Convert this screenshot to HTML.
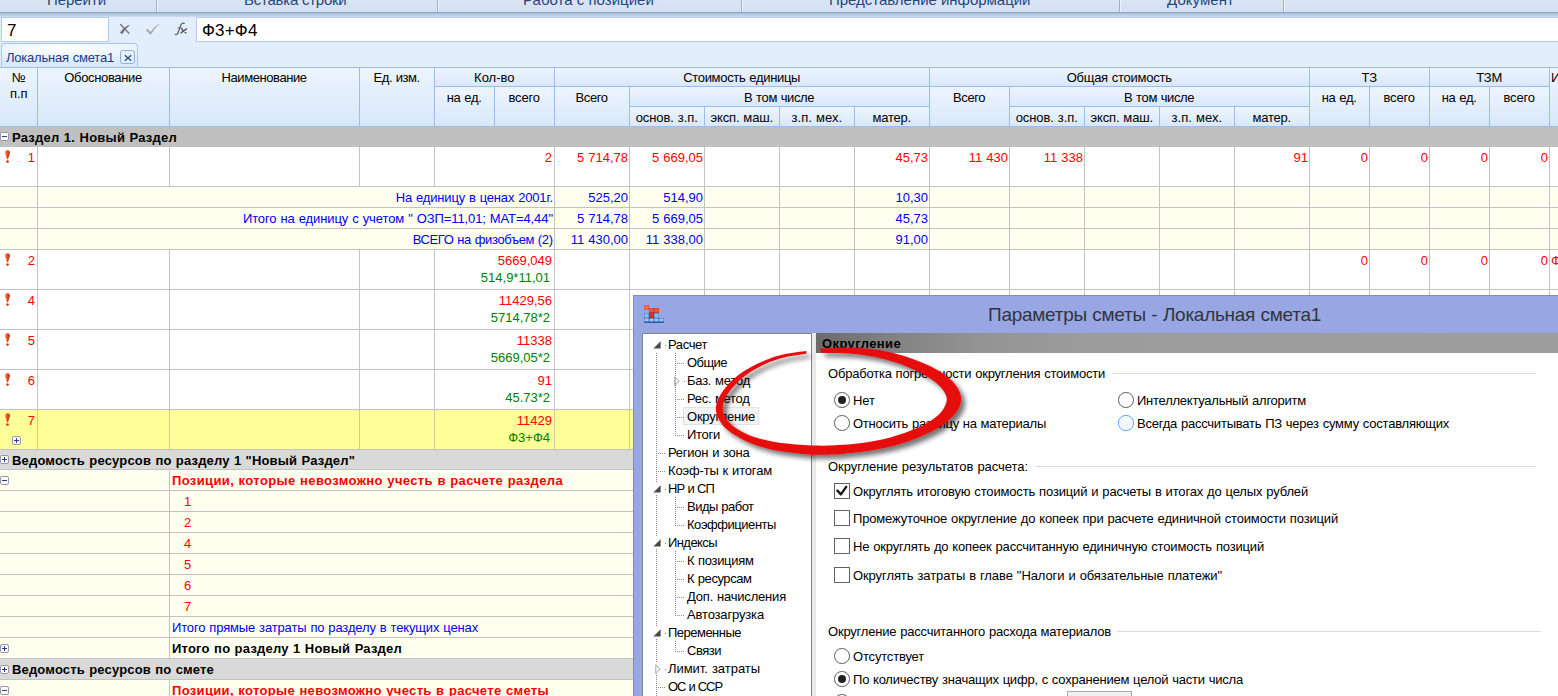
<!DOCTYPE html><html><head><meta charset="utf-8"><title>Smeta</title><style>
*{margin:0;padding:0;box-sizing:border-box}
html,body{width:1558px;height:696px;overflow:hidden;background:#fff}
body{font-family:"Liberation Sans",sans-serif;font-size:13px;color:#000;position:relative}
.a{position:absolute;white-space:nowrap}
.t{position:absolute;white-space:nowrap;line-height:15px;height:15px;word-spacing:0.5px}
.r{text-align:right}
.c{text-align:center}
.red{color:#ff0000}
.blue{color:#0000f0}
.grn{color:#008000}
.b{font-weight:bold}
.hl{position:absolute;height:1px;background:#c2c2c2}
.vl{position:absolute;width:1px;background:#c2c2c2}
.hh{position:absolute;height:1px;background:#9dbde9}
.hv{position:absolute;width:1px;background:#9dbde9}
.hc{position:absolute;background:linear-gradient(#ecf4fe,#e3eefc 50%,#d7e7fb)}
.pm{position:absolute;width:9px;height:9px;border:1px solid #9898a8;border-radius:2px;background:#fff}
.pm i{position:absolute;left:1px;top:3px;width:5px;height:1px;background:#2a3c8c}
.pm b{position:absolute;left:3px;top:1px;width:1px;height:5px;background:#2a3c8c}
</style></head><body>
<div class="a" style="left:0;top:0;width:1558px;height:13px;background:linear-gradient(#d9e5f4,#d3e0f1)"></div>
<div class="a" style="left:0;top:12px;width:1558px;height:1px;background:#8fa5c5"></div>
<div class="a" style="left:0;top:13px;width:1558px;height:4px;background:linear-gradient(#a9bcd8,#cfdef1)"></div>
<div class="a" style="left:156px;top:0;width:1px;height:12px;background:#9eb2cf"></div>
<div class="a" style="left:157px;top:0;width:1px;height:12px;background:#eef4fb"></div>
<div class="a" style="left:437px;top:0;width:1px;height:12px;background:#9eb2cf"></div>
<div class="a" style="left:438px;top:0;width:1px;height:12px;background:#eef4fb"></div>
<div class="a" style="left:741px;top:0;width:1px;height:12px;background:#9eb2cf"></div>
<div class="a" style="left:742px;top:0;width:1px;height:12px;background:#eef4fb"></div>
<div class="a" style="left:1119px;top:0;width:1px;height:12px;background:#9eb2cf"></div>
<div class="a" style="left:1120px;top:0;width:1px;height:12px;background:#eef4fb"></div>
<div class="a" style="left:1283px;top:0;width:1px;height:12px;background:#9eb2cf"></div>
<div class="a" style="left:1284px;top:0;width:1px;height:12px;background:#eef4fb"></div>
<div class="a" style="left:0;top:0;width:1558px;height:12px;overflow:hidden">
<div class="a" style="left:47px;top:-9px;font-size:15px;line-height:18px;color:#24467e;letter-spacing:-0.062px">Перейти</div>
<div class="a" style="left:244px;top:-9px;font-size:15px;line-height:18px;color:#24467e;letter-spacing:-0.250px">Вставка строки</div>
<div class="a" style="left:523px;top:-9px;font-size:15px;line-height:18px;color:#24467e;letter-spacing:0.016px">Работа с позицией</div>
<div class="a" style="left:829px;top:-9px;font-size:15px;line-height:18px;color:#24467e;letter-spacing:-0.025px">Представление информации</div>
<div class="a" style="left:1167px;top:-9px;font-size:15px;line-height:18px;color:#24467e;letter-spacing:0.057px">Документ</div>
</div>
<div class="a" style="left:0;top:17px;width:1558px;height:26px;background:#e3eefc"></div>
<div class="a" style="left:1px;top:17px;width:108px;height:25px;background:#fff;border:1px solid #b4cbea"></div>
<div class="a" style="left:7px;top:20px;font-size:17px;line-height:21px">7</div>
<div class="a" style="left:196px;top:17px;width:1370px;height:25px;background:#fff;border:1px solid #b4cbea"></div>
<div class="a" style="left:202px;top:20px;font-size:17px;line-height:21px;letter-spacing:0.163px">Ф3+Ф4</div>
<svg class="a" style="left:116px;top:20px" width="76" height="20" viewBox="116 20 76 20"><path d="M120.6 24.6 L128.9 33.3" stroke="#7a7a7a" stroke-width="1.5" fill="none" stroke-linecap="round"/><path d="M120.3 32.6 C122.5 29.5 125.5 26.8 128.9 25 L129.2 25.5 C126.5 27.8 124 30.6 122.2 33.9 Z" fill="#6c6c6c" stroke="#6c6c6c" stroke-width="0.5" stroke-linejoin="round"/><path d="M145.9 30.1 L147.3 28.7 L150.6 32.1 C153 28.6 155.8 25.8 159 23.8 L159.3 24.3 C156 27.2 153.2 30.6 150.9 34.6 L150.2 34.6 Z" fill="#a6a6a6"/></svg>
<svg class="a" style="left:172px;top:20px" width="20" height="18" viewBox="172 20 20 18"><path d="M175.2 34.4 C176.6 35.2 177.6 34.2 178.2 32.2 L180.6 25.6 C181.3 23.6 182.6 22.6 184.2 23.4" stroke="#5e5e5e" stroke-width="1.25" fill="none" stroke-linecap="round"/><path d="M177.6 27.9 L182.6 27.9" stroke="#6a6a6a" stroke-width="0.9" fill="none"/><path d="M181.6 28.9 L186 32.9 M186.6 28.9 L181 32.9" stroke="#555" stroke-width="1.3" fill="none" stroke-linecap="round"/></svg>
<div class="a" style="left:0;top:43px;width:1558px;height:24px;background:#e3eefc"></div>
<div class="a" style="left:1px;top:43px;width:137px;height:25px;border:1px solid #a9c5ec;border-bottom:none;border-radius:4px 4px 0 0;background:radial-gradient(ellipse 70% 60% at 45% 18%,#ffffff,#eef5fe 55%,rgba(226,237,252,0) 100%),linear-gradient(#eef5fe,#dfebfb 60%,#d9e7fa)"></div>
<div class="t " style="letter-spacing:-0.212px;left:6px;top:50.00px;color:#1c3a8c;">Локальная смета1</div>
<div class="a" style="left:120px;top:50px;width:15px;height:14px;border:1px solid #8fadde;border-radius:2.5px;background:#e6f0fc"></div>
<svg class="a" style="left:123.5px;top:53.5px" width="8" height="8" viewBox="0 0 8 8"><path d="M0.8 1.2 L7.2 6.8 M7.2 1.2 L0.8 6.8" stroke="#2a4a9c" stroke-width="1.35" fill="none"/></svg>
<div class="a" style="left:0;top:67px;width:1558px;height:60px;background:#dde9fa"></div>
<div class="hc" style="left:0px;top:68px;width:37px;height:59px"></div>
<div class="hc" style="left:37px;top:68px;width:132px;height:59px"></div>
<div class="hc" style="left:169px;top:68px;width:190px;height:59px"></div>
<div class="hc" style="left:359px;top:68px;width:75px;height:59px"></div>
<div class="hc" style="left:1549px;top:68px;width:9px;height:59px"></div>
<div class="hc" style="left:434px;top:68px;width:120px;height:19px"></div>
<div class="hc" style="left:554px;top:68px;width:375px;height:19px"></div>
<div class="hc" style="left:929px;top:68px;width:380px;height:19px"></div>
<div class="hc" style="left:1309px;top:68px;width:120px;height:19px"></div>
<div class="hc" style="left:1429px;top:68px;width:120px;height:19px"></div>
<div class="hc" style="left:434px;top:87px;width:60px;height:40px"></div>
<div class="hc" style="left:494px;top:87px;width:60px;height:40px"></div>
<div class="hc" style="left:554px;top:87px;width:75px;height:40px"></div>
<div class="hc" style="left:929px;top:87px;width:80px;height:40px"></div>
<div class="hc" style="left:1309px;top:87px;width:60px;height:40px"></div>
<div class="hc" style="left:1369px;top:87px;width:60px;height:40px"></div>
<div class="hc" style="left:1429px;top:87px;width:60px;height:40px"></div>
<div class="hc" style="left:1489px;top:87px;width:60px;height:40px"></div>
<div class="hc" style="left:629px;top:87px;width:300px;height:20px"></div>
<div class="hc" style="left:1009px;top:87px;width:300px;height:20px"></div>
<div class="hc" style="left:629px;top:107px;width:75px;height:20px"></div>
<div class="hc" style="left:704px;top:107px;width:75px;height:20px"></div>
<div class="hc" style="left:779px;top:107px;width:75px;height:20px"></div>
<div class="hc" style="left:854px;top:107px;width:75px;height:20px"></div>
<div class="hc" style="left:1009px;top:107px;width:75px;height:20px"></div>
<div class="hc" style="left:1084px;top:107px;width:75px;height:20px"></div>
<div class="hc" style="left:1159px;top:107px;width:75px;height:20px"></div>
<div class="hc" style="left:1234px;top:107px;width:75px;height:20px"></div>
<div class="hh" style="left:0;top:67px;width:1558px"></div>
<div class="hh" style="left:0;top:126px;width:1558px"></div>
<div class="hh" style="left:434px;top:86px;width:1115px"></div>
<div class="hh" style="left:629px;top:106px;width:300px"></div>
<div class="hh" style="left:1009px;top:106px;width:300px"></div>
<div class="hv" style="left:37px;top:67px;height:60px"></div>
<div class="hv" style="left:169px;top:67px;height:60px"></div>
<div class="hv" style="left:359px;top:67px;height:60px"></div>
<div class="hv" style="left:434px;top:67px;height:60px"></div>
<div class="hv" style="left:554px;top:67px;height:60px"></div>
<div class="hv" style="left:929px;top:67px;height:60px"></div>
<div class="hv" style="left:1309px;top:67px;height:60px"></div>
<div class="hv" style="left:1429px;top:67px;height:60px"></div>
<div class="hv" style="left:1549px;top:67px;height:60px"></div>
<div class="hv" style="left:494px;top:87px;height:40px"></div>
<div class="hv" style="left:629px;top:87px;height:40px"></div>
<div class="hv" style="left:1009px;top:87px;height:40px"></div>
<div class="hv" style="left:1369px;top:87px;height:40px"></div>
<div class="hv" style="left:1489px;top:87px;height:40px"></div>
<div class="hv" style="left:704px;top:107px;height:20px"></div>
<div class="hv" style="left:779px;top:107px;height:20px"></div>
<div class="hv" style="left:854px;top:107px;height:20px"></div>
<div class="hv" style="left:1084px;top:107px;height:20px"></div>
<div class="hv" style="left:1159px;top:107px;height:20px"></div>
<div class="hv" style="left:1234px;top:107px;height:20px"></div>
<div class="t c" style="letter-spacing:-0.946px;left:-0.17px;width:37.0px;top:70.00px;">№</div>
<div class="t c" style="letter-spacing:-0.063px;left:0.27px;width:37.0px;top:86.00px;">п.п</div>
<div class="t c" style="letter-spacing:-0.351px;left:37.12px;width:132.0px;top:70.00px;">Обоснование</div>
<div class="t c" style="letter-spacing:-0.427px;left:169.09px;width:190.0px;top:70.00px;">Наименование</div>
<div class="t c" style="letter-spacing:-0.469px;left:359.07px;width:75.0px;top:70.00px;">Ед. изм.</div>
<div class="t c" style="letter-spacing:0.013px;left:434.31px;width:119.99999999999994px;top:70.00px;">Кол-во</div>
<div class="t c" style="letter-spacing:-0.307px;left:554.15px;width:375.0px;top:70.00px;">Стоимость единицы</div>
<div class="t c" style="letter-spacing:-0.255px;left:929.17px;width:380.0px;top:70.00px;">Общая стоимость</div>
<div class="t c" style="letter-spacing:-0.073px;left:1309.26px;width:120.0px;top:70.00px;">ТЗ</div>
<div class="t c" style="letter-spacing:-0.159px;left:1429.22px;width:120.0px;top:70.00px;">ТЗМ</div>
<div class="t " style="left:1551px;top:70.00px;">И</div>
<div class="t c" style="letter-spacing:-0.277px;left:434.16px;width:60.0px;top:90.00px;">на ед.</div>
<div class="t c" style="letter-spacing:-0.135px;left:494.23px;width:59.99999999999994px;top:90.00px;">всего</div>
<div class="t c" style="letter-spacing:-0.418px;left:554.09px;width:75.0px;top:90.00px;">Всего</div>
<div class="t c" style="letter-spacing:-0.384px;left:629.11px;width:300.0px;top:90.00px;">В том числе</div>
<div class="t c" style="letter-spacing:-0.418px;left:929.09px;width:80.0px;top:90.00px;">Всего</div>
<div class="t c" style="letter-spacing:-0.384px;left:1009.11px;width:300.0px;top:90.00px;">В том числе</div>
<div class="t c" style="letter-spacing:-0.277px;left:1309.16px;width:60.0px;top:90.00px;">на ед.</div>
<div class="t c" style="letter-spacing:-0.135px;left:1369.23px;width:60.0px;top:90.00px;">всего</div>
<div class="t c" style="letter-spacing:-0.277px;left:1429.16px;width:60.0px;top:90.00px;">на ед.</div>
<div class="t c" style="letter-spacing:-0.135px;left:1489.23px;width:60.0px;top:90.00px;">всего</div>
<div class="t c" style="letter-spacing:-0.090px;left:629.25px;width:75.0px;top:110.00px;">основ. з.п.</div>
<div class="t c" style="letter-spacing:-0.144px;left:704.23px;width:75.0px;top:110.00px;">эксп. маш.</div>
<div class="t c" style="letter-spacing:0.019px;left:779.31px;width:75.0px;top:110.00px;">з.п. мех.</div>
<div class="t c" style="letter-spacing:-0.210px;left:854.19px;width:75.0px;top:110.00px;">матер.</div>
<div class="t c" style="letter-spacing:-0.090px;left:1009.25px;width:75.0px;top:110.00px;">основ. з.п.</div>
<div class="t c" style="letter-spacing:-0.144px;left:1084.23px;width:75.0px;top:110.00px;">эксп. маш.</div>
<div class="t c" style="letter-spacing:0.019px;left:1159.31px;width:75.0px;top:110.00px;">з.п. мех.</div>
<div class="t c" style="letter-spacing:-0.210px;left:1234.19px;width:75.0px;top:110.00px;">матер.</div>
<div class="a" style="left:0;top:127px;width:1558px;height:20px;background:#c0c0c0"></div>
<div class="pm" style="left:0px;top:132px"><i></i></div>
<div class="t b" style="letter-spacing:0.238px;left:12px;top:130.00px;">Раздел 1. Новый Раздел</div>
<div class="a" style="left:0;top:147px;width:1558px;height:39px;background:#ffffff"></div>
<div class="hl" style="left:0px;top:186px;width:1558px"></div>
<div class="vl" style="left:37px;top:147px;height:39px"></div>
<div class="vl" style="left:169px;top:147px;height:39px"></div>
<div class="vl" style="left:359px;top:147px;height:39px"></div>
<div class="vl" style="left:434px;top:147px;height:39px"></div>
<div class="vl" style="left:554px;top:147px;height:39px"></div>
<div class="vl" style="left:629px;top:147px;height:39px"></div>
<div class="vl" style="left:704px;top:147px;height:39px"></div>
<div class="vl" style="left:779px;top:147px;height:39px"></div>
<div class="vl" style="left:854px;top:147px;height:39px"></div>
<div class="vl" style="left:929px;top:147px;height:39px"></div>
<div class="vl" style="left:1009px;top:147px;height:39px"></div>
<div class="vl" style="left:1084px;top:147px;height:39px"></div>
<div class="vl" style="left:1159px;top:147px;height:39px"></div>
<div class="vl" style="left:1234px;top:147px;height:39px"></div>
<div class="vl" style="left:1309px;top:147px;height:39px"></div>
<div class="vl" style="left:1369px;top:147px;height:39px"></div>
<div class="vl" style="left:1429px;top:147px;height:39px"></div>
<div class="vl" style="left:1489px;top:147px;height:39px"></div>
<div class="vl" style="left:1549px;top:147px;height:39px"></div>
<svg class="a" style="left:4px;top:150px" width="7" height="14" viewBox="0 0 7 14"><defs><linearGradient id="g1" x1="0" y1="0" x2="1" y2="0"><stop offset="0" stop-color="#f39a78"/><stop offset="0.45" stop-color="#ea4a1c"/><stop offset="1" stop-color="#c8380e"/></linearGradient></defs><path d="M3.5 0.2 C5.7 0.2 6.2 1.7 5.9 3.4 L4.0 9.2 L3.0 9.2 L1.1 3.4 C0.8 1.7 1.3 0.2 3.5 0.2 Z" fill="url(#g1)"/><circle cx="3.5" cy="11.6" r="1.45" fill="#dc4010"/></svg>
<div class="t red r" style="right:1523.00px;top:150.00px;">1</div>
<div class="t red r" style="right:1006.00px;top:150.00px;">2</div>
<div class="t red r" style="right:930.00px;top:150.00px;">5 714,78</div>
<div class="t red r" style="right:855.00px;top:150.00px;">5 669,05</div>
<div class="t red r" style="right:630.00px;top:150.00px;">45,73</div>
<div class="t red r" style="right:550.00px;top:150.00px;">11 430</div>
<div class="t red r" style="right:475.00px;top:150.00px;">11 338</div>
<div class="t red r" style="right:250.00px;top:150.00px;">91</div>
<div class="t red r" style="right:190.00px;top:150.00px;">0</div>
<div class="t red r" style="right:130.00px;top:150.00px;">0</div>
<div class="t red r" style="right:70.00px;top:150.00px;">0</div>
<div class="t red r" style="right:10.00px;top:150.00px;">0</div>
<div class="a" style="left:0;top:187px;width:1558px;height:20px;background:#fffff0"></div>
<div class="hl" style="left:0px;top:207px;width:1558px"></div>
<div class="vl" style="left:37px;top:187px;height:20px"></div>
<div class="vl" style="left:554px;top:187px;height:20px"></div>
<div class="vl" style="left:629px;top:187px;height:20px"></div>
<div class="vl" style="left:704px;top:187px;height:20px"></div>
<div class="vl" style="left:779px;top:187px;height:20px"></div>
<div class="vl" style="left:854px;top:187px;height:20px"></div>
<div class="vl" style="left:929px;top:187px;height:20px"></div>
<div class="vl" style="left:1009px;top:187px;height:20px"></div>
<div class="vl" style="left:1084px;top:187px;height:20px"></div>
<div class="vl" style="left:1159px;top:187px;height:20px"></div>
<div class="vl" style="left:1234px;top:187px;height:20px"></div>
<div class="vl" style="left:1309px;top:187px;height:20px"></div>
<div class="vl" style="left:1369px;top:187px;height:20px"></div>
<div class="vl" style="left:1429px;top:187px;height:20px"></div>
<div class="vl" style="left:1489px;top:187px;height:20px"></div>
<div class="vl" style="left:1549px;top:187px;height:20px"></div>
<div class="t blue r" style="letter-spacing:-0.171px;right:1005.17px;top:190.00px;">На единицу в ценах 2001г.</div>
<div class="t blue r" style="right:930.00px;top:190.00px;">525,20</div>
<div class="t blue r" style="right:855.00px;top:190.00px;">514,90</div>
<div class="t blue r" style="right:630.00px;top:190.00px;">10,30</div>
<div class="a" style="left:0;top:208px;width:1558px;height:20px;background:#fffff0"></div>
<div class="hl" style="left:0px;top:228px;width:1558px"></div>
<div class="vl" style="left:37px;top:208px;height:20px"></div>
<div class="vl" style="left:554px;top:208px;height:20px"></div>
<div class="vl" style="left:629px;top:208px;height:20px"></div>
<div class="vl" style="left:704px;top:208px;height:20px"></div>
<div class="vl" style="left:779px;top:208px;height:20px"></div>
<div class="vl" style="left:854px;top:208px;height:20px"></div>
<div class="vl" style="left:929px;top:208px;height:20px"></div>
<div class="vl" style="left:1009px;top:208px;height:20px"></div>
<div class="vl" style="left:1084px;top:208px;height:20px"></div>
<div class="vl" style="left:1159px;top:208px;height:20px"></div>
<div class="vl" style="left:1234px;top:208px;height:20px"></div>
<div class="vl" style="left:1309px;top:208px;height:20px"></div>
<div class="vl" style="left:1369px;top:208px;height:20px"></div>
<div class="vl" style="left:1429px;top:208px;height:20px"></div>
<div class="vl" style="left:1489px;top:208px;height:20px"></div>
<div class="vl" style="left:1549px;top:208px;height:20px"></div>
<div class="t blue r" style="letter-spacing:-0.096px;right:1005.10px;top:211.00px;">Итого на единицу с учетом " ОЗП=11,01; МАТ=4,44"</div>
<div class="t blue r" style="right:930.00px;top:211.00px;">5 714,78</div>
<div class="t blue r" style="right:855.00px;top:211.00px;">5 669,05</div>
<div class="t blue r" style="right:630.00px;top:211.00px;">45,73</div>
<div class="a" style="left:0;top:229px;width:1558px;height:20px;background:#fffff0"></div>
<div class="hl" style="left:0px;top:249px;width:1558px"></div>
<div class="vl" style="left:37px;top:229px;height:20px"></div>
<div class="vl" style="left:554px;top:229px;height:20px"></div>
<div class="vl" style="left:629px;top:229px;height:20px"></div>
<div class="vl" style="left:704px;top:229px;height:20px"></div>
<div class="vl" style="left:779px;top:229px;height:20px"></div>
<div class="vl" style="left:854px;top:229px;height:20px"></div>
<div class="vl" style="left:929px;top:229px;height:20px"></div>
<div class="vl" style="left:1009px;top:229px;height:20px"></div>
<div class="vl" style="left:1084px;top:229px;height:20px"></div>
<div class="vl" style="left:1159px;top:229px;height:20px"></div>
<div class="vl" style="left:1234px;top:229px;height:20px"></div>
<div class="vl" style="left:1309px;top:229px;height:20px"></div>
<div class="vl" style="left:1369px;top:229px;height:20px"></div>
<div class="vl" style="left:1429px;top:229px;height:20px"></div>
<div class="vl" style="left:1489px;top:229px;height:20px"></div>
<div class="vl" style="left:1549px;top:229px;height:20px"></div>
<div class="t blue r" style="letter-spacing:-0.365px;right:1005.36px;top:232.00px;">ВСЕГО на физобъем (2)</div>
<div class="t blue r" style="right:930.00px;top:232.00px;">11 430,00</div>
<div class="t blue r" style="right:855.00px;top:232.00px;">11 338,00</div>
<div class="t blue r" style="right:630.00px;top:232.00px;">91,00</div>
<div class="a" style="left:0;top:250px;width:1558px;height:39px;background:#ffffff"></div>
<div class="hl" style="left:0px;top:289px;width:1558px"></div>
<div class="vl" style="left:37px;top:250px;height:39px"></div>
<div class="vl" style="left:169px;top:250px;height:39px"></div>
<div class="vl" style="left:359px;top:250px;height:39px"></div>
<div class="vl" style="left:434px;top:250px;height:39px"></div>
<div class="vl" style="left:554px;top:250px;height:39px"></div>
<div class="vl" style="left:629px;top:250px;height:39px"></div>
<div class="vl" style="left:704px;top:250px;height:39px"></div>
<div class="vl" style="left:779px;top:250px;height:39px"></div>
<div class="vl" style="left:854px;top:250px;height:39px"></div>
<div class="vl" style="left:929px;top:250px;height:39px"></div>
<div class="vl" style="left:1009px;top:250px;height:39px"></div>
<div class="vl" style="left:1084px;top:250px;height:39px"></div>
<div class="vl" style="left:1159px;top:250px;height:39px"></div>
<div class="vl" style="left:1234px;top:250px;height:39px"></div>
<div class="vl" style="left:1309px;top:250px;height:39px"></div>
<div class="vl" style="left:1369px;top:250px;height:39px"></div>
<div class="vl" style="left:1429px;top:250px;height:39px"></div>
<div class="vl" style="left:1489px;top:250px;height:39px"></div>
<div class="vl" style="left:1549px;top:250px;height:39px"></div>
<svg class="a" style="left:4px;top:253px" width="7" height="14" viewBox="0 0 7 14"><defs><linearGradient id="g2" x1="0" y1="0" x2="1" y2="0"><stop offset="0" stop-color="#f39a78"/><stop offset="0.45" stop-color="#ea4a1c"/><stop offset="1" stop-color="#c8380e"/></linearGradient></defs><path d="M3.5 0.2 C5.7 0.2 6.2 1.7 5.9 3.4 L4.0 9.2 L3.0 9.2 L1.1 3.4 C0.8 1.7 1.3 0.2 3.5 0.2 Z" fill="url(#g2)"/><circle cx="3.5" cy="11.6" r="1.45" fill="#dc4010"/></svg>
<div class="t red r" style="right:1523.00px;top:253.00px;">2</div>
<div class="t red r" style="right:1006.00px;top:253.00px;">5669,049</div>
<div class="t grn r" style="right:1008.00px;top:270.00px;">514,9*11,01</div>
<div class="a" style="left:0;top:290px;width:1558px;height:39px;background:#ffffff"></div>
<div class="hl" style="left:0px;top:329px;width:1558px"></div>
<div class="vl" style="left:37px;top:290px;height:39px"></div>
<div class="vl" style="left:169px;top:290px;height:39px"></div>
<div class="vl" style="left:359px;top:290px;height:39px"></div>
<div class="vl" style="left:434px;top:290px;height:39px"></div>
<div class="vl" style="left:554px;top:290px;height:39px"></div>
<div class="vl" style="left:629px;top:290px;height:39px"></div>
<div class="vl" style="left:704px;top:290px;height:39px"></div>
<div class="vl" style="left:779px;top:290px;height:39px"></div>
<div class="vl" style="left:854px;top:290px;height:39px"></div>
<div class="vl" style="left:929px;top:290px;height:39px"></div>
<div class="vl" style="left:1009px;top:290px;height:39px"></div>
<div class="vl" style="left:1084px;top:290px;height:39px"></div>
<div class="vl" style="left:1159px;top:290px;height:39px"></div>
<div class="vl" style="left:1234px;top:290px;height:39px"></div>
<div class="vl" style="left:1309px;top:290px;height:39px"></div>
<div class="vl" style="left:1369px;top:290px;height:39px"></div>
<div class="vl" style="left:1429px;top:290px;height:39px"></div>
<div class="vl" style="left:1489px;top:290px;height:39px"></div>
<div class="vl" style="left:1549px;top:290px;height:39px"></div>
<svg class="a" style="left:4px;top:293px" width="7" height="14" viewBox="0 0 7 14"><defs><linearGradient id="g3" x1="0" y1="0" x2="1" y2="0"><stop offset="0" stop-color="#f39a78"/><stop offset="0.45" stop-color="#ea4a1c"/><stop offset="1" stop-color="#c8380e"/></linearGradient></defs><path d="M3.5 0.2 C5.7 0.2 6.2 1.7 5.9 3.4 L4.0 9.2 L3.0 9.2 L1.1 3.4 C0.8 1.7 1.3 0.2 3.5 0.2 Z" fill="url(#g3)"/><circle cx="3.5" cy="11.6" r="1.45" fill="#dc4010"/></svg>
<div class="t red r" style="right:1523.00px;top:293.00px;">4</div>
<div class="t red r" style="right:1006.00px;top:293.00px;">11429,56</div>
<div class="t grn r" style="right:1008.00px;top:310.00px;">5714,78*2</div>
<div class="a" style="left:0;top:330px;width:1558px;height:39px;background:#ffffff"></div>
<div class="hl" style="left:0px;top:369px;width:1558px"></div>
<div class="vl" style="left:37px;top:330px;height:39px"></div>
<div class="vl" style="left:169px;top:330px;height:39px"></div>
<div class="vl" style="left:359px;top:330px;height:39px"></div>
<div class="vl" style="left:434px;top:330px;height:39px"></div>
<div class="vl" style="left:554px;top:330px;height:39px"></div>
<div class="vl" style="left:629px;top:330px;height:39px"></div>
<div class="vl" style="left:704px;top:330px;height:39px"></div>
<div class="vl" style="left:779px;top:330px;height:39px"></div>
<div class="vl" style="left:854px;top:330px;height:39px"></div>
<div class="vl" style="left:929px;top:330px;height:39px"></div>
<div class="vl" style="left:1009px;top:330px;height:39px"></div>
<div class="vl" style="left:1084px;top:330px;height:39px"></div>
<div class="vl" style="left:1159px;top:330px;height:39px"></div>
<div class="vl" style="left:1234px;top:330px;height:39px"></div>
<div class="vl" style="left:1309px;top:330px;height:39px"></div>
<div class="vl" style="left:1369px;top:330px;height:39px"></div>
<div class="vl" style="left:1429px;top:330px;height:39px"></div>
<div class="vl" style="left:1489px;top:330px;height:39px"></div>
<div class="vl" style="left:1549px;top:330px;height:39px"></div>
<svg class="a" style="left:4px;top:333px" width="7" height="14" viewBox="0 0 7 14"><defs><linearGradient id="g4" x1="0" y1="0" x2="1" y2="0"><stop offset="0" stop-color="#f39a78"/><stop offset="0.45" stop-color="#ea4a1c"/><stop offset="1" stop-color="#c8380e"/></linearGradient></defs><path d="M3.5 0.2 C5.7 0.2 6.2 1.7 5.9 3.4 L4.0 9.2 L3.0 9.2 L1.1 3.4 C0.8 1.7 1.3 0.2 3.5 0.2 Z" fill="url(#g4)"/><circle cx="3.5" cy="11.6" r="1.45" fill="#dc4010"/></svg>
<div class="t red r" style="right:1523.00px;top:333.00px;">5</div>
<div class="t red r" style="right:1006.00px;top:333.00px;">11338</div>
<div class="t grn r" style="right:1008.00px;top:350.00px;">5669,05*2</div>
<div class="a" style="left:0;top:370px;width:1558px;height:39px;background:#ffffff"></div>
<div class="hl" style="left:0px;top:409px;width:1558px"></div>
<div class="vl" style="left:37px;top:370px;height:39px"></div>
<div class="vl" style="left:169px;top:370px;height:39px"></div>
<div class="vl" style="left:359px;top:370px;height:39px"></div>
<div class="vl" style="left:434px;top:370px;height:39px"></div>
<div class="vl" style="left:554px;top:370px;height:39px"></div>
<div class="vl" style="left:629px;top:370px;height:39px"></div>
<div class="vl" style="left:704px;top:370px;height:39px"></div>
<div class="vl" style="left:779px;top:370px;height:39px"></div>
<div class="vl" style="left:854px;top:370px;height:39px"></div>
<div class="vl" style="left:929px;top:370px;height:39px"></div>
<div class="vl" style="left:1009px;top:370px;height:39px"></div>
<div class="vl" style="left:1084px;top:370px;height:39px"></div>
<div class="vl" style="left:1159px;top:370px;height:39px"></div>
<div class="vl" style="left:1234px;top:370px;height:39px"></div>
<div class="vl" style="left:1309px;top:370px;height:39px"></div>
<div class="vl" style="left:1369px;top:370px;height:39px"></div>
<div class="vl" style="left:1429px;top:370px;height:39px"></div>
<div class="vl" style="left:1489px;top:370px;height:39px"></div>
<div class="vl" style="left:1549px;top:370px;height:39px"></div>
<svg class="a" style="left:4px;top:373px" width="7" height="14" viewBox="0 0 7 14"><defs><linearGradient id="g5" x1="0" y1="0" x2="1" y2="0"><stop offset="0" stop-color="#f39a78"/><stop offset="0.45" stop-color="#ea4a1c"/><stop offset="1" stop-color="#c8380e"/></linearGradient></defs><path d="M3.5 0.2 C5.7 0.2 6.2 1.7 5.9 3.4 L4.0 9.2 L3.0 9.2 L1.1 3.4 C0.8 1.7 1.3 0.2 3.5 0.2 Z" fill="url(#g5)"/><circle cx="3.5" cy="11.6" r="1.45" fill="#dc4010"/></svg>
<div class="t red r" style="right:1523.00px;top:373.00px;">6</div>
<div class="t red r" style="right:1006.00px;top:373.00px;">91</div>
<div class="t grn r" style="right:1008.00px;top:390.00px;">45.73*2</div>
<div class="a" style="left:0;top:410px;width:1558px;height:39px;background:#ffff99"></div>
<div class="hl" style="left:0px;top:449px;width:1558px"></div>
<div class="vl" style="left:37px;top:410px;height:39px;background:#cdcd92"></div>
<div class="vl" style="left:169px;top:410px;height:39px;background:#cdcd92"></div>
<div class="vl" style="left:359px;top:410px;height:39px;background:#cdcd92"></div>
<div class="vl" style="left:434px;top:410px;height:39px;background:#cdcd92"></div>
<div class="vl" style="left:554px;top:410px;height:39px;background:#cdcd92"></div>
<div class="vl" style="left:629px;top:410px;height:39px;background:#cdcd92"></div>
<div class="vl" style="left:704px;top:410px;height:39px;background:#cdcd92"></div>
<div class="vl" style="left:779px;top:410px;height:39px;background:#cdcd92"></div>
<div class="vl" style="left:854px;top:410px;height:39px;background:#cdcd92"></div>
<div class="vl" style="left:929px;top:410px;height:39px;background:#cdcd92"></div>
<div class="vl" style="left:1009px;top:410px;height:39px;background:#cdcd92"></div>
<div class="vl" style="left:1084px;top:410px;height:39px;background:#cdcd92"></div>
<div class="vl" style="left:1159px;top:410px;height:39px;background:#cdcd92"></div>
<div class="vl" style="left:1234px;top:410px;height:39px;background:#cdcd92"></div>
<div class="vl" style="left:1309px;top:410px;height:39px;background:#cdcd92"></div>
<div class="vl" style="left:1369px;top:410px;height:39px;background:#cdcd92"></div>
<div class="vl" style="left:1429px;top:410px;height:39px;background:#cdcd92"></div>
<div class="vl" style="left:1489px;top:410px;height:39px;background:#cdcd92"></div>
<div class="vl" style="left:1549px;top:410px;height:39px;background:#cdcd92"></div>
<svg class="a" style="left:4px;top:413px" width="7" height="14" viewBox="0 0 7 14"><defs><linearGradient id="g6" x1="0" y1="0" x2="1" y2="0"><stop offset="0" stop-color="#f39a78"/><stop offset="0.45" stop-color="#ea4a1c"/><stop offset="1" stop-color="#c8380e"/></linearGradient></defs><path d="M3.5 0.2 C5.7 0.2 6.2 1.7 5.9 3.4 L4.0 9.2 L3.0 9.2 L1.1 3.4 C0.8 1.7 1.3 0.2 3.5 0.2 Z" fill="url(#g6)"/><circle cx="3.5" cy="11.6" r="1.45" fill="#dc4010"/></svg>
<div class="t red r" style="right:1523.00px;top:413.00px;">7</div>
<div class="t red r" style="right:1006.00px;top:413.00px;">11429</div>
<div class="t grn r" style="right:1008.00px;top:430.00px;">Ф3+Ф4</div>
<div class="t red r" style="right:190.00px;top:253.00px;">0</div>
<div class="t red r" style="right:130.00px;top:253.00px;">0</div>
<div class="t red r" style="right:70.00px;top:253.00px;">0</div>
<div class="t red r" style="right:10.00px;top:253.00px;">0</div>
<div class="t red" style="left:1551px;top:253.00px;">Ф</div>
<div class="pm" style="left:12px;top:436px"><i></i><b></b></div>
<div class="a" style="left:0;top:450px;width:1558px;height:19px;background:#d9d9d9"></div>
<div class="hl" style="left:0px;top:469px;width:1558px"></div>
<div class="pm" style="left:0px;top:455px"><i></i><b></b></div>
<div class="t b" style="letter-spacing:0.175px;left:12px;top:453.00px;">Ведомость ресурсов по разделу 1 "Новый Раздел"</div>
<div class="a" style="left:0;top:470px;width:1558px;height:20px;background:#fffff0"></div>
<div class="hl" style="left:0px;top:490px;width:1558px"></div>
<div class="vl" style="left:169px;top:470px;height:20px"></div>
<div class="t b red" style="letter-spacing:0.372px;left:172px;top:473.00px;">Позиции, которые невозможно учесть в расчете раздела</div>
<div class="pm" style="left:0px;top:476px"><i></i></div>
<div class="a" style="left:0;top:491px;width:1558px;height:20px;background:#fffff0"></div>
<div class="hl" style="left:0px;top:511px;width:1558px"></div>
<div class="vl" style="left:169px;top:491px;height:20px"></div>
<div class="t red" style="left:184px;top:494.00px;">1</div>
<div class="a" style="left:0;top:512px;width:1558px;height:20px;background:#fffff0"></div>
<div class="hl" style="left:0px;top:532px;width:1558px"></div>
<div class="vl" style="left:169px;top:512px;height:20px"></div>
<div class="t red" style="left:184px;top:515.00px;">2</div>
<div class="a" style="left:0;top:533px;width:1558px;height:20px;background:#fffff0"></div>
<div class="hl" style="left:0px;top:553px;width:1558px"></div>
<div class="vl" style="left:169px;top:533px;height:20px"></div>
<div class="t red" style="left:184px;top:536.00px;">4</div>
<div class="a" style="left:0;top:554px;width:1558px;height:20px;background:#fffff0"></div>
<div class="hl" style="left:0px;top:574px;width:1558px"></div>
<div class="vl" style="left:169px;top:554px;height:20px"></div>
<div class="t red" style="left:184px;top:557.00px;">5</div>
<div class="a" style="left:0;top:575px;width:1558px;height:20px;background:#fffff0"></div>
<div class="hl" style="left:0px;top:595px;width:1558px"></div>
<div class="vl" style="left:169px;top:575px;height:20px"></div>
<div class="t red" style="left:184px;top:578.00px;">6</div>
<div class="a" style="left:0;top:596px;width:1558px;height:20px;background:#fffff0"></div>
<div class="hl" style="left:0px;top:616px;width:1558px"></div>
<div class="vl" style="left:169px;top:596px;height:20px"></div>
<div class="t red" style="left:184px;top:599.00px;">7</div>
<div class="a" style="left:0;top:617px;width:1558px;height:20px;background:#fffff0"></div>
<div class="hl" style="left:0px;top:637px;width:1558px"></div>
<div class="vl" style="left:169px;top:617px;height:20px"></div>
<div class="t blue" style="letter-spacing:-0.144px;left:172px;top:620.00px;">Итого прямые затраты по разделу в текущих ценах</div>
<div class="a" style="left:0;top:638px;width:1558px;height:20px;background:#fffff0"></div>
<div class="hl" style="left:0px;top:658px;width:1558px"></div>
<div class="vl" style="left:169px;top:638px;height:20px"></div>
<div class="t b" style="letter-spacing:0.215px;left:172px;top:641.00px;">Итого по разделу 1 Новый Раздел</div>
<div class="pm" style="left:0px;top:644px"><i></i><b></b></div>
<div class="a" style="left:0;top:659px;width:1558px;height:20px;background:#d9d9d9"></div>
<div class="hl" style="left:0px;top:679px;width:1558px"></div>
<div class="pm" style="left:0px;top:665px"><i></i><b></b></div>
<div class="t b" style="letter-spacing:0.168px;left:12px;top:662.00px;">Ведомость ресурсов по смете</div>
<div class="a" style="left:0;top:680px;width:1558px;height:20px;background:#fffff0"></div>
<div class="vl" style="left:169px;top:680px;height:20px"></div>
<div class="pm" style="left:0px;top:686px"><i></i></div>
<div class="t b red" style="letter-spacing:0.334px;left:172px;top:683.00px;">Позиции, которые невозможно учесть в расчете сметы</div>
<div class="a" style="left:633px;top:295px;width:930px;height:410px;background:#98a7e3;border-left:1px solid #7c8cc9;border-top:1px solid #7c8cc9"></div>
<svg class="a" style="left:644px;top:305px" width="20" height="18" viewBox="0 0 20 18"><rect x="0" y="8" width="15" height="5.5" fill="#3a6cba"/><rect x="0" y="13" width="20" height="5" fill="#2c5cab"/><rect x="0.4" y="8.4" width="4.2" height="4.2" fill="#8ebcf2"/><rect x="10.4" y="8.4" width="4.2" height="4.2" fill="#8ebcf2"/><rect x="0.4" y="13.4" width="4.2" height="3" fill="#9cc6f5"/><rect x="5.4" y="13.4" width="4.2" height="3" fill="#9cc6f5"/><rect x="10.4" y="13.4" width="4.2" height="3" fill="#9cc6f5"/><rect x="15.4" y="13.4" width="4.2" height="3" fill="#9cc6f5"/><rect x="0" y="0" width="5" height="4.6" fill="#d8452e"/><rect x="0.3" y="0.3" width="4" height="3.6" fill="#f07058"/><rect x="5" y="3" width="10" height="5" fill="#c83422"/><rect x="5.4" y="3.4" width="4" height="3.8" fill="#ea5a42"/><rect x="10.4" y="3.4" width="4" height="3.8" fill="#ea5a42"/><rect x="5" y="8" width="5" height="5.2" fill="#b8200f"/><rect x="5.4" y="8.3" width="4" height="4" fill="#d63a26"/></svg>
<div class="t " style="letter-spacing:-0.273px;font-size:19px;line-height:23px;height:23px;left:988px;top:302.92px;color:#31333f;">Параметры сметы - Локальная смета1</div>
<div class="a" style="left:642px;top:333px;width:170px;height:370px;background:#fff;border:1px solid #82828c"></div>
<div class="a" style="left:812px;top:333px;width:4px;height:370px;background:#e9e9e9"></div>
<div class="a" style="left:816px;top:333px;width:750px;height:370px;background:#fff"></div>
<div class="a" style="left:816px;top:332.6px;width:750px;height:20.1px;background:linear-gradient(90deg,#6b6b6b 0,#808080 70px,#939393 160px,#9c9c9c 270px,#9d9d9d)"></div>
<div class="t b" style="letter-spacing:0.390px;left:822px;top:335.50px;">Округление</div>
<div class="a" style="left:656px;top:353px;width:1px;height:343px;background:repeating-linear-gradient(#8a8a8a 0 1px,transparent 1px 2px)"></div>
<div class="a" style="left:652px;top:338px;width:10px;height:13px;background:#fff"></div>
<svg class="a" style="left:653px;top:341px" width="8" height="8" viewBox="0 0 8 8"><path d="M7.6 0.2 L7.6 7.6 L0.4 7.6 Z" fill="#484848"/></svg>
<div class="a" style="left:665px;top:345px;width:1px;height:1px;background:repeating-linear-gradient(90deg,#8a8a8a 0 1px,transparent 1px 2px)"></div>
<div class="t " style="letter-spacing:-0.392px;left:668px;top:337.00px;">Расчет</div>
<div class="a" style="left:677px;top:363px;width:8px;height:1px;background:repeating-linear-gradient(90deg,#8a8a8a 0 1px,transparent 1px 2px)"></div>
<div class="t " style="letter-spacing:-0.549px;left:687px;top:355.00px;">Общие</div>
<div class="a" style="left:671px;top:374px;width:10px;height:13px;background:#fff"></div>
<svg class="a" style="left:674px;top:376px" width="7" height="11" viewBox="0 0 7 11"><path d="M0.8 0.8 L5.2 5.2 L0.8 9.6 Z" fill="#fff" stroke="#a2a2a2" stroke-width="1"/></svg>
<div class="a" style="left:684px;top:381px;width:1px;height:1px;background:repeating-linear-gradient(90deg,#8a8a8a 0 1px,transparent 1px 2px)"></div>
<div class="t " style="letter-spacing:-0.237px;left:687px;top:373.00px;">Баз. метод</div>
<div class="a" style="left:677px;top:399px;width:8px;height:1px;background:repeating-linear-gradient(90deg,#8a8a8a 0 1px,transparent 1px 2px)"></div>
<div class="t " style="letter-spacing:-0.313px;left:687px;top:391.00px;">Рес. метод</div>
<div class="a" style="left:683px;top:407px;width:76px;height:18px;background:#f3f3f3;border:1px solid #e2e2e2"></div>
<div class="a" style="left:677px;top:417px;width:8px;height:1px;background:repeating-linear-gradient(90deg,#8a8a8a 0 1px,transparent 1px 2px)"></div>
<div class="t " style="letter-spacing:-0.233px;left:687px;top:409.00px;">Округление</div>
<div class="a" style="left:677px;top:435px;width:8px;height:1px;background:repeating-linear-gradient(90deg,#8a8a8a 0 1px,transparent 1px 2px)"></div>
<div class="t " style="letter-spacing:-0.277px;left:687px;top:427.00px;">Итоги</div>
<div class="a" style="left:658px;top:453px;width:8px;height:1px;background:repeating-linear-gradient(90deg,#8a8a8a 0 1px,transparent 1px 2px)"></div>
<div class="t " style="letter-spacing:-0.245px;left:668px;top:445.00px;">Регион и зона</div>
<div class="a" style="left:658px;top:471px;width:8px;height:1px;background:repeating-linear-gradient(90deg,#8a8a8a 0 1px,transparent 1px 2px)"></div>
<div class="t " style="letter-spacing:-0.162px;left:668px;top:463.00px;">Коэф-ты к итогам</div>
<div class="a" style="left:652px;top:482px;width:10px;height:13px;background:#fff"></div>
<svg class="a" style="left:653px;top:485px" width="8" height="8" viewBox="0 0 8 8"><path d="M7.6 0.2 L7.6 7.6 L0.4 7.6 Z" fill="#484848"/></svg>
<div class="a" style="left:665px;top:489px;width:1px;height:1px;background:repeating-linear-gradient(90deg,#8a8a8a 0 1px,transparent 1px 2px)"></div>
<div class="t " style="letter-spacing:-0.897px;left:668px;top:481.00px;">НР и СП</div>
<div class="a" style="left:677px;top:507px;width:8px;height:1px;background:repeating-linear-gradient(90deg,#8a8a8a 0 1px,transparent 1px 2px)"></div>
<div class="t " style="letter-spacing:-0.528px;left:687px;top:499.00px;">Виды работ</div>
<div class="a" style="left:677px;top:525px;width:8px;height:1px;background:repeating-linear-gradient(90deg,#8a8a8a 0 1px,transparent 1px 2px)"></div>
<div class="t " style="letter-spacing:-0.459px;left:687px;top:517.00px;">Коэффициенты</div>
<div class="a" style="left:652px;top:536px;width:10px;height:13px;background:#fff"></div>
<svg class="a" style="left:653px;top:539px" width="8" height="8" viewBox="0 0 8 8"><path d="M7.6 0.2 L7.6 7.6 L0.4 7.6 Z" fill="#484848"/></svg>
<div class="a" style="left:665px;top:543px;width:1px;height:1px;background:repeating-linear-gradient(90deg,#8a8a8a 0 1px,transparent 1px 2px)"></div>
<div class="t " style="letter-spacing:-0.574px;left:668px;top:535.00px;">Индексы</div>
<div class="a" style="left:677px;top:561px;width:8px;height:1px;background:repeating-linear-gradient(90deg,#8a8a8a 0 1px,transparent 1px 2px)"></div>
<div class="t " style="letter-spacing:-0.321px;left:687px;top:553.00px;">К позициям</div>
<div class="a" style="left:677px;top:579px;width:8px;height:1px;background:repeating-linear-gradient(90deg,#8a8a8a 0 1px,transparent 1px 2px)"></div>
<div class="t " style="letter-spacing:-0.440px;left:687px;top:571.00px;">К ресурсам</div>
<div class="a" style="left:677px;top:597px;width:8px;height:1px;background:repeating-linear-gradient(90deg,#8a8a8a 0 1px,transparent 1px 2px)"></div>
<div class="t " style="letter-spacing:-0.193px;left:687px;top:589.00px;">Доп. начисления</div>
<div class="a" style="left:677px;top:615px;width:8px;height:1px;background:repeating-linear-gradient(90deg,#8a8a8a 0 1px,transparent 1px 2px)"></div>
<div class="t " style="letter-spacing:-0.155px;left:687px;top:607.00px;">Автозагрузка</div>
<div class="a" style="left:652px;top:626px;width:10px;height:13px;background:#fff"></div>
<svg class="a" style="left:653px;top:629px" width="8" height="8" viewBox="0 0 8 8"><path d="M7.6 0.2 L7.6 7.6 L0.4 7.6 Z" fill="#484848"/></svg>
<div class="a" style="left:665px;top:633px;width:1px;height:1px;background:repeating-linear-gradient(90deg,#8a8a8a 0 1px,transparent 1px 2px)"></div>
<div class="t " style="letter-spacing:-0.514px;left:668px;top:625.00px;">Переменные</div>
<div class="a" style="left:677px;top:651px;width:8px;height:1px;background:repeating-linear-gradient(90deg,#8a8a8a 0 1px,transparent 1px 2px)"></div>
<div class="t " style="letter-spacing:-0.482px;left:687px;top:643.00px;">Связи</div>
<div class="a" style="left:652px;top:662px;width:10px;height:13px;background:#fff"></div>
<svg class="a" style="left:655px;top:664px" width="7" height="11" viewBox="0 0 7 11"><path d="M0.8 0.8 L5.2 5.2 L0.8 9.6 Z" fill="#fff" stroke="#a2a2a2" stroke-width="1"/></svg>
<div class="a" style="left:665px;top:669px;width:1px;height:1px;background:repeating-linear-gradient(90deg,#8a8a8a 0 1px,transparent 1px 2px)"></div>
<div class="t " style="letter-spacing:-0.040px;left:668px;top:661.00px;">Лимит. затраты</div>
<div class="a" style="left:658px;top:687px;width:8px;height:1px;background:repeating-linear-gradient(90deg,#8a8a8a 0 1px,transparent 1px 2px)"></div>
<div class="t " style="letter-spacing:-1.054px;left:668px;top:679.00px;">ОС и ССР</div>
<div class="a" style="left:675px;top:353px;width:1px;height:83px;background:repeating-linear-gradient(#8a8a8a 0 1px,transparent 1px 2px)"></div>
<div class="a" style="left:675px;top:497px;width:1px;height:29px;background:repeating-linear-gradient(#8a8a8a 0 1px,transparent 1px 2px)"></div>
<div class="a" style="left:675px;top:551px;width:1px;height:65px;background:repeating-linear-gradient(#8a8a8a 0 1px,transparent 1px 2px)"></div>
<div class="a" style="left:675px;top:641px;width:1px;height:11px;background:repeating-linear-gradient(#8a8a8a 0 1px,transparent 1px 2px)"></div>
<div class="t " style="letter-spacing:-0.211px;left:828px;top:366.00px;">Обработка погрешности округления стоимости</div>
<div class="a" style="left:1112px;top:373px;width:424px;height:1px;background:#d5dfea"></div>
<div class="a" style="left:834.1px;top:392.2px;width:15.6px;height:15.6px;border:1.15px solid #5e5e5e;border-radius:50%;background:#fff"></div><div class="a" style="left:838px;top:396px;width:8px;height:8px;border-radius:50%;background:#222"></div>
<div class="t " style="letter-spacing:-0.047px;left:853px;top:393.00px;">Нет</div>
<div class="a" style="left:834.1px;top:415.2px;width:15.6px;height:15.6px;border:1.15px solid #5e5e5e;border-radius:50%;background:#fff"></div>
<div class="t " style="letter-spacing:-0.239px;left:853px;top:416.00px;">Относить разницу на материалы</div>
<div class="a" style="left:1118.1px;top:392.2px;width:15.6px;height:15.6px;border:1.15px solid #5e5e5e;border-radius:50%;background:#fff"></div>
<div class="t " style="letter-spacing:-0.248px;left:1137px;top:393.00px;">Интеллектуальный алгоритм</div>
<div class="a" style="left:1118.1px;top:415.2px;width:15.6px;height:15.6px;border:1.15px solid #3f93f7;border-radius:50%;background:#fff"></div>
<div class="t " style="letter-spacing:-0.225px;left:1137px;top:416.00px;">Всегда рассчитывать ПЗ через сумму составляющих</div>
<div class="a" style="left:1119.4px;top:416.4px;width:13.2px;height:13.2px;border-radius:50%;background:#f2f7fd"></div>
<div class="t " style="letter-spacing:-0.059px;left:828px;top:459.00px;">Округление результатов расчета:</div>
<div class="a" style="left:1035px;top:466px;width:501px;height:1px;background:#d5dfea"></div>
<div class="a" style="left:834px;top:483px;width:16px;height:15.8px;border:1px solid #626262;background:#fff"></div>
<svg class="a" style="left:834px;top:483px" width="16" height="16" viewBox="0 0 16 16"><path d="M3.4 7.6 L6.9 11.4 L12.2 3.9" stroke="#1c1c1c" stroke-width="2.5" fill="none" stroke-linecap="round" stroke-linejoin="round"/></svg>
<div class="t " style="letter-spacing:-0.155px;left:853px;top:484.00px;">Округлять итоговую стоимость позиций и расчеты в итогах до целых рублей</div>
<div class="a" style="left:834px;top:510px;width:16px;height:15.8px;border:1px solid #626262;background:#fff"></div>
<div class="t " style="letter-spacing:-0.167px;left:853px;top:511.00px;">Промежуточное округление до копеек при расчете единичной стоимости позиций</div>
<div class="a" style="left:834px;top:538px;width:16px;height:15.8px;border:1px solid #626262;background:#fff"></div>
<div class="t " style="letter-spacing:-0.170px;left:853px;top:539.00px;">Не округлять до копеек рассчитанную единичную стоимость позиций</div>
<div class="a" style="left:834px;top:567px;width:16px;height:15.8px;border:1px solid #626262;background:#fff"></div>
<div class="t " style="letter-spacing:-0.088px;left:853px;top:568.00px;">Округлять затраты в главе "Налоги и обязательные платежи"</div>
<div class="t " style="letter-spacing:-0.207px;left:828px;top:624.00px;">Округление рассчитанного расхода материалов</div>
<div class="a" style="left:1117px;top:631px;width:424px;height:1px;background:#d5dfea"></div>
<div class="a" style="left:834.1px;top:648.2px;width:15.6px;height:15.6px;border:1.15px solid #5e5e5e;border-radius:50%;background:#fff"></div>
<div class="t " style="letter-spacing:-0.174px;left:853px;top:649.00px;">Отсутствует</div>
<div class="a" style="left:834.1px;top:671.2px;width:15.6px;height:15.6px;border:1.15px solid #5e5e5e;border-radius:50%;background:#fff"></div><div class="a" style="left:838px;top:675px;width:8px;height:8px;border-radius:50%;background:#222"></div>
<div class="t " style="letter-spacing:-0.218px;left:853px;top:672.00px;">По количеству значащих цифр, с сохранением целой части числа</div>
<div class="a" style="left:834.1px;top:694.2px;width:15.6px;height:15.6px;border:1.15px solid #5e5e5e;border-radius:50%;background:#fff"></div>
<div class="a" style="left:1067px;top:691px;width:65px;height:20px;background:#f0f0f0;border:1px solid #a9a9a9"></div>
<svg class="a" style="left:0;top:0" width="1558" height="696" viewBox="0 0 1558 696"><defs><filter id="sh" x="-10%" y="-10%" width="125%" height="130%"><feGaussianBlur in="SourceAlpha" stdDeviation="2.4"/><feOffset dx="3.5" dy="4"/><feComponentTransfer><feFuncA type="linear" slope="0.55"/></feComponentTransfer><feMerge><feMergeNode/><feMergeNode in="SourceGraphic"/></feMerge></filter></defs><path d="M806.4 350.9 C802.7 351.4 790.9 352.6 784.0 354.2 C777.1 355.8 771.5 357.6 765.3 360.2 C759.1 362.8 752.3 366.1 746.7 369.5 C741.1 372.9 736.1 376.5 731.7 380.7 C727.3 384.9 723.1 390.3 720.5 394.7 C717.9 399.1 716.2 402.8 715.9 406.9 C715.6 410.9 716.7 415.1 718.7 419.0 C720.7 422.9 723.3 426.5 728.0 430.2 C732.7 433.9 740.5 438.4 746.7 441.4 C752.9 444.3 759.1 446.2 765.3 447.9 C771.5 449.6 777.8 450.7 784.0 451.7 C790.2 452.7 796.5 453.4 802.7 453.9 C808.9 454.4 815.1 454.8 821.3 454.8 C827.5 454.9 835.6 454.4 840.0 454.2 C844.4 453.9 843.1 453.8 847.4 453.3 C851.7 452.8 859.8 452.1 866.0 451.2 C872.2 450.3 878.5 449.4 884.7 448.0 C890.9 446.6 897.2 445.0 903.4 443.0 C909.6 441.0 916.2 438.5 922.1 435.9 C928.0 433.3 933.9 430.6 938.9 427.5 C943.9 424.4 948.6 420.6 952.0 417.2 C955.4 413.8 957.9 410.3 959.4 406.9 C960.9 403.5 961.4 400.0 960.9 396.6 C960.4 393.2 959.0 389.8 956.6 386.4 C954.2 383.0 950.6 379.4 946.4 376.1 C942.2 372.8 937.0 369.7 931.4 366.8 C925.8 363.9 918.9 361.1 912.7 358.9 C906.5 356.6 900.3 354.9 894.1 353.3 C887.9 351.8 881.6 350.5 875.4 349.6 C869.2 348.7 862.9 348.0 856.7 347.7 C850.5 347.4 844.1 347.6 838.0 347.7 C831.9 347.8 823.2 348.4 820.3 348.5 L821.2 352.7 C824.0 352.8 832.1 352.9 838.0 353.1 C843.9 353.4 850.5 353.6 856.7 354.2 C862.9 354.8 869.2 355.7 875.4 357.0 C881.6 358.3 887.9 360.1 894.1 362.1 C900.3 364.1 906.8 366.6 912.7 369.2 C918.6 371.8 924.9 375.0 929.6 378.0 C934.3 381.0 938.0 384.2 940.8 387.3 C943.6 390.4 945.6 393.7 946.4 396.6 C947.2 399.6 946.6 402.0 945.4 405.0 C944.1 408.0 942.2 411.3 938.9 414.4 C935.6 417.5 930.8 420.9 925.8 423.7 C920.8 426.5 914.9 428.9 909.0 431.2 C903.1 433.5 896.5 435.7 890.3 437.4 C884.1 439.1 877.8 440.4 871.6 441.5 C865.4 442.6 859.2 443.3 853.0 443.9 C846.8 444.5 839.6 444.9 834.3 445.2 C829.0 445.5 826.6 445.7 821.3 445.7 C816.0 445.7 808.9 445.5 802.7 445.1 C796.5 444.7 790.2 444.2 784.0 443.3 C777.8 442.4 771.2 441.3 765.3 439.9 C759.4 438.5 753.8 437.1 748.5 434.9 C743.2 432.7 737.5 429.5 733.6 426.5 C729.7 423.5 727.0 420.4 725.2 417.1 C723.4 413.8 722.6 410.3 722.8 406.9 C722.9 403.5 724.0 400.3 726.1 396.6 C728.2 392.9 731.8 388.4 735.5 384.5 C739.2 380.6 743.5 376.7 748.5 373.3 C753.5 369.9 759.4 366.5 765.3 363.9 C771.2 361.2 777.1 359.1 784.0 357.4 C790.9 355.7 802.7 354.3 806.4 353.7 Z" fill="#e6110f" filter="url(#sh)"/></svg>
</body></html>
